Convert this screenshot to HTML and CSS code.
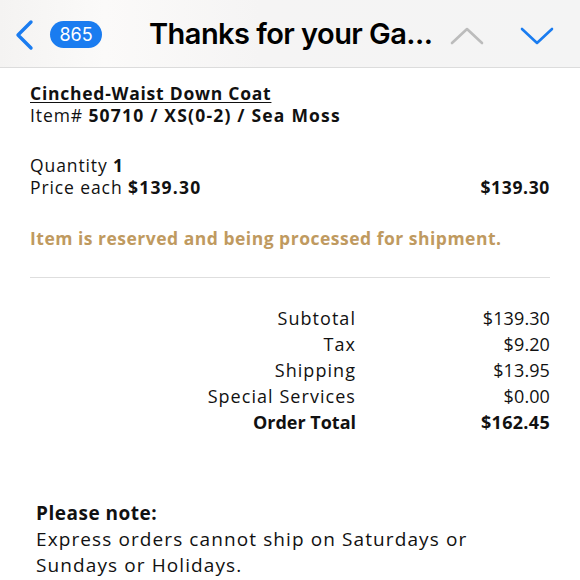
FILE: index.html
```html
<!DOCTYPE html>
<html>
<head>
<meta charset="utf-8">
<link rel="stylesheet" href="styles.css">
</head>
<body>
<header class="bar">
  <svg class="back" width="22" height="32" viewBox="0 0 22 32"><path d="M18 3 L5 16 L18 29" fill="none" stroke="#1a7cf0" stroke-width="3.4" stroke-linecap="round" stroke-linejoin="round"/></svg>
  <span class="badge">865</span>
  <h1 class="title">Thanks for your Ga...</h1>
  <svg class="chev" width="34" height="20" viewBox="0 0 34 20"><path d="M2 17 L17 3 L32 17" fill="none" stroke="#bcbcbc" stroke-width="2.6" stroke-linecap="round" stroke-linejoin="round"/></svg>
  <svg class="chev down" width="34" height="20" viewBox="0 0 34 20"><path d="M2 3 L17 17 L32 3" fill="none" stroke="#1a7cf0" stroke-width="2.6" stroke-linecap="round" stroke-linejoin="round"/></svg>
</header>
<main class="mail">
  <section class="item">
    <a class="name">Cinched-Waist Down Coat</a>
    <div>Item# <b>50710 / XS(0-2) / Sea Moss</b></div>
  </section>
  <section class="qty">
    <div>Quantity <b>1</b></div>
    <div class="price-row"><span>Price each <b>$139.30</b></span><b class="line-total">$139.30</b></div>
  </section>
  <p class="status">Item is reserved and being processed for shipment.</p>
  <hr class="rule">
  <section class="totals">
    <span class="lbl">Subtotal</span><span class="val">$139.30</span>
    <span class="lbl">Tax</span><span class="val">$9.20</span>
    <span class="lbl">Shipping</span><span class="val">$13.95</span>
    <span class="lbl">Special Services</span><span class="val">$0.00</span>
    <b class="lbl">Order Total</b><b class="val">$162.45</b>
  </section>
  <section class="note">
    <b>Please note:</b>
    <div class="note-text">Express orders cannot ship on Saturdays or Sundays or Holidays.</div>
  </section>
</main>
</body>
</html>
```
FILE: styles.css
```css
* { box-sizing: border-box; }
body {
  margin: 0;
  width: 580px;
  height: 580px;
  overflow: hidden;
  background: #fff;
  font-family: "Open Sans", "Liberation Sans", sans-serif;
  color: #111;
}
.bar {
  height: 68px;
  display: flex;
  align-items: center;
  background: linear-gradient(90deg, #f4f3f2 0%, #fbfaf9 18%, #f5f4f4 45%, #f4f4f4 100%);
  border-bottom: 1px solid #dcdcdc;
  padding: 0 0 0 13px;
}
.back { margin-top: 2px; }
.badge {
  margin-left: 15px;
  width: 52px;
  height: 27px;
  border-radius: 14px;
  background: #1a7cf0;
  color: #fff;
  font-family: Inter, Roboto, sans-serif;
  font-size: 18px;
  display: flex;
  align-items: center;
  justify-content: center;
  margin-top: 2px;
}
.title {
  margin: 0 0 0 47px;
  font-family: Inter, Roboto, sans-serif;
  font-size: 29px;
  font-weight: 600;
  color: #000;
  letter-spacing: -0.55px;
}
.chev { margin-left: 18px; margin-top: 4px; }
.chev.down { margin-left: 36px; }
.mail {
  padding: 14px 30px 0 30px;
  font-size: 17.5px;
  line-height: 22px;
  letter-spacing: 0.9px;
}
.mail b { letter-spacing: 1.2px; }
.mail .line-total { letter-spacing: 0.65px; }
.name {
  font-weight: 700;
  letter-spacing: 0.75px;
  text-decoration: underline;
  text-underline-offset: 2px;
}
.qty { margin-top: 28px; }
.price-row { display: flex; justify-content: space-between; }
.status {
  margin: 29px 0 0;
  color: #bf9a60;
  font-weight: 700;
  letter-spacing: 0.5px;
}
.rule {
  margin: 28px 0 0;
  border: 0;
  border-top: 1.5px solid #dedede;
}
.totals {
  margin-top: 27px;
  display: grid;
  grid-template-columns: 326px 1fr;
  font-size: 18px;
  line-height: 26px;
}
.lbl { text-align: right; letter-spacing: 1.05px; }
.val { text-align: right; letter-spacing: 0.1px; }
.mail b.lbl { letter-spacing: 0; }
.mail b.val { letter-spacing: 0.3px; }
.note {
  margin-top: 65px;
  padding-left: 6px;
  font-size: 19px;
  line-height: 26px;
}
.mail .note b { letter-spacing: 0.5px; }
.note-text { max-width: 445px; letter-spacing: 1.1px; }
```
